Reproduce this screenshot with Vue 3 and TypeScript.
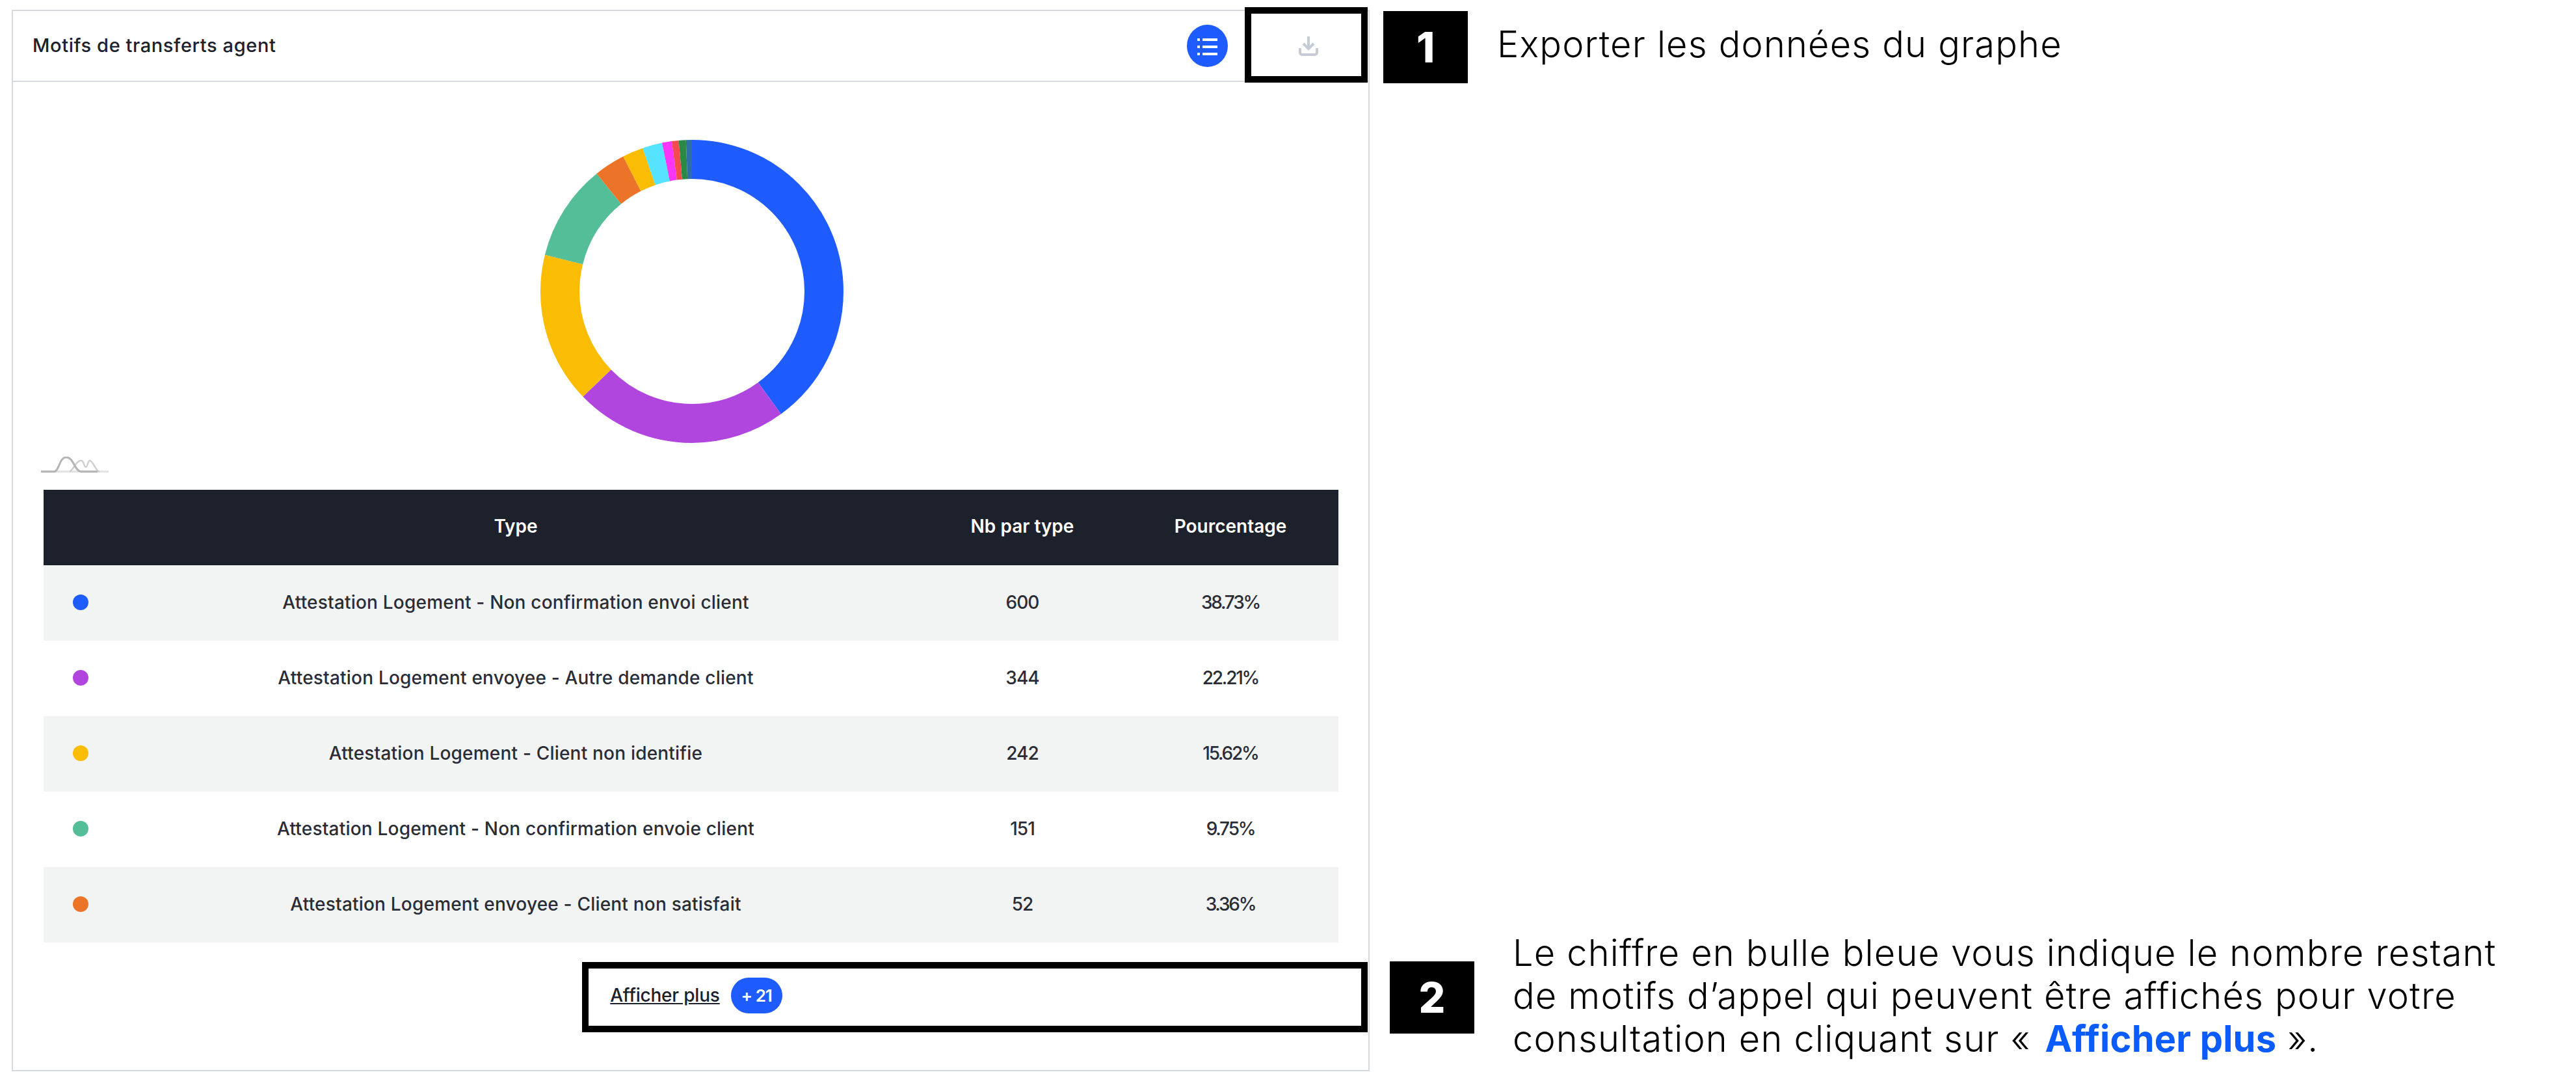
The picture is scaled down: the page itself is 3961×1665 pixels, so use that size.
<script setup lang="ts">
    interface Slice {
        color: string
        end: number
    }
    interface Row {
        color: string
        label: string
        count: number
        pct: string
    }

    // angles read clockwise from the top of the ring
    const slices: Slice[] = [
        { color: '#1f5cff', end: 144 },
        { color: '#b146df', end: 226 },
        { color: '#fbbc04', end: 284 },
        { color: '#53be98', end: 321 },
        { color: '#ec7428', end: 333 },
        { color: '#fbbc04', end: 341 },
        { color: '#55e3ff', end: 348.6 },
        { color: '#f835f8', end: 352.3 },
        { color: '#f44c4c', end: 355 },
        { color: '#2a8a44', end: 357.7 },
        { color: '#2e6fa8', end: 360 },
    ]

    const arcs = slices.map((s, i) => {
        const start = i === 0 ? 0 : slices[i - 1].end
        return { color: s.color, start, size: s.end - start }
    })

    const rows: Row[] = [
        { color: '#1f5cff', label: 'Attestation Logement - Non confirmation envoi client', count: 600, pct: '38.73%' },
        { color: '#b146df', label: 'Attestation Logement envoyee - Autre demande client', count: 344, pct: '22.21%' },
        { color: '#fbbc04', label: 'Attestation Logement - Client non identifie', count: 242, pct: '15.62%' },
        { color: '#53be98', label: 'Attestation Logement - Non confirmation envoie client', count: 151, pct: '9.75%' },
        { color: '#ec7428', label: 'Attestation Logement envoyee - Client non satisfait', count: 52, pct: '3.36%' },
    ]
</script>

<template>
    <div class="page">
        <section class="card">
            <header class="card-head">
                <h2>Motifs de transferts agent</h2>
                <span class="list-btn">
                    <svg width="31" height="26" viewBox="0 0 31 26" fill="#fff">
                        <rect x="0" y="0" width="4" height="4" />
                        <rect x="8" y="0" width="23" height="4" />
                        <rect x="0" y="11" width="4" height="4" />
                        <rect x="8" y="11" width="23" height="4" />
                        <rect x="0" y="22" width="4" height="4" />
                        <rect x="8" y="22" width="23" height="4" />
                    </svg>
                </span>
                <svg class="export" width="30" height="30" viewBox="0 0 30 30" fill="none" stroke="#c6ccd3" stroke-width="4">
                    <path d="M15 0v19" />
                    <path d="M7 11l8 8 8-8" />
                    <path d="M2 18v7a3 3 0 0 0 3 3h20a3 3 0 0 0 3-3v-7" />
                </svg>
            </header>

            <div class="chart">
                <svg class="donut" width="470" height="470" viewBox="0 0 470 470">
                    <circle
                        v-for="a in arcs"
                        :key="a.start"
                        cx="235"
                        cy="235"
                        r="203"
                        fill="none"
                        stroke-width="60"
                        pathLength="360"
                        transform="rotate(-90 235 235)"
                        :stroke="a.color"
                        :stroke-dasharray="`${a.size} 360`"
                        :stroke-dashoffset="-a.start"
                    />
                </svg>
            </div>

            <svg class="spark" width="104" height="26" viewBox="0 0 104 26" fill="none">
                <path d="M0 23H104" stroke="#e2e2e2" stroke-width="3" />
                <path d="M44 23C50 20 54 6 62 6C66 6 66 16 69 16C72 16 72 6 75 6C80 6 84 23 90 23" stroke="#cfcfcf" stroke-width="2.5" />
                <path d="M0 23H20C28 23 28 1 39 1C50 1 52 23 62 23H87" stroke="#b4b4b4" stroke-width="3" />
            </svg>

            <table class="types">
                <colgroup>
                    <col class="c-dot" />
                    <col class="c-type" />
                    <col class="c-nb" />
                    <col class="c-pct" />
                </colgroup>
                <thead>
                    <tr>
                        <th></th>
                        <th>Type</th>
                        <th>Nb par type</th>
                        <th>Pourcentage</th>
                    </tr>
                </thead>
                <tbody>
                    <tr v-for="r in rows" :key="r.label">
                        <td><span class="dot" :style="{ background: r.color }"></span></td>
                        <td>{{ r.label }}</td>
                        <td class="count">{{ r.count }}</td>
                        <td class="pct">{{ r.pct }}</td>
                    </tr>
                </tbody>
            </table>

            <div class="more">
                <a class="more-link">Afficher plus</a>
                <span class="more-badge">+ 21</span>
            </div>
        </section>

        <aside class="notes">
            <div class="note note-one">
                <span class="num">1</span>
                <p>Exporter les données du graphe</p>
            </div>
            <div class="note note-two">
                <span class="num">2</span>
                <p>
                    Le chiffre en bulle bleue vous indique le nombre restant<br />
                    de motifs d’appel qui peuvent être affichés pour votre<br />
                    consultation en cliquant sur « <b>Afficher plus</b> ».
                </p>
            </div>
        </aside>

        <div class="mark mark-export"></div>
        <div class="mark mark-more"></div>
    </div>
</template>

<style scoped>
    .page {
        position: relative;
        width: 3961px;
        height: 1665px;
        display: flex;
        box-sizing: border-box;
        padding: 15px 0 18px 18px;
        background: #fff;
        font-family: Inter, 'Noto Sans', sans-serif;
        color: #000;
        overflow: hidden;
    }
    .card {
        width: 2088px;
        box-sizing: border-box;
        border: 2px solid #d6dade;
        display: flex;
        flex-direction: column;
    }
    .card-head {
        height: 109px;
        box-sizing: border-box;
        border-bottom: 2px solid #d6dade;
        display: flex;
        align-items: center;
        padding-left: 30px;
    }
    .card-head h2 {
        flex: 1;
        margin: 0 0 2px;
        font-size: 29px;
        font-weight: 500;
        letter-spacing: 0.6px;
        color: #1d212b;
    }
    .list-btn {
        width: 63px;
        height: 65px;
        border-radius: 50%;
        background: #1f5cff;
        display: flex;
        align-items: center;
        justify-content: center;
    }
    .list-btn svg {
        margin-top: 3px;
    }
    .export {
        margin: 0 77px 0 109px;
    }
    .chart {
        display: flex;
        justify-content: center;
        padding: 87px 0 0 3px;
    }
    .donut {
        display: block;
    }
    .spark {
        display: block;
        margin: 19px 0 25px 43px;
    }
    .types {
        width: 1991px;
        margin-left: 47px;
        border-collapse: collapse;
        table-layout: fixed;
        font-size: 28px;
        color: #2a2d35;
    }
    .c-dot {
        width: 101px;
    }
    .c-type {
        width: 1250px;
    }
    .c-nb {
        width: 308px;
    }
    .c-pct {
        width: 332px;
    }
    .types th {
        height: 116px;
        box-sizing: border-box;
        padding: 0 0 4px;
        background: #1d212b;
        color: #fff;
        font-weight: 600;
    }
    .types td {
        height: 116px;
        box-sizing: border-box;
        padding: 0 0 2px;
        text-align: center;
        font-weight: 500;
        letter-spacing: 0.2px;
    }
    .types td.count {
        letter-spacing: -1px;
    }
    .types td.pct {
        letter-spacing: -2.2px;
    }
    .types tbody tr:nth-child(odd) {
        background: #f2f4f4;
    }
    .dot {
        display: block;
        width: 24px;
        height: 24px;
        margin-left: 45px;
        border-radius: 50%;
    }
    .more {
        flex: 1;
        display: flex;
        align-items: flex-start;
        justify-content: center;
        gap: 17px;
        padding: 54px 0 0 17px;
    }
    .more-link {
        margin-top: 10px;
        font-size: 28px;
        font-weight: 500;
        letter-spacing: -0.2px;
        color: #1d212b;
        text-decoration: underline;
    }
    .more-badge {
        width: 79px;
        height: 55px;
        border-radius: 28px;
        background: #1f5cff;
        color: #fff;
        font-size: 26px;
        font-weight: 600;
        letter-spacing: -1px;
        display: flex;
        align-items: center;
        justify-content: center;
    }
    .notes {
        flex: 1;
        display: flex;
        flex-direction: column;
        justify-content: space-between;
        padding: 2px 0 12px;
    }
    .note {
        display: flex;
        align-items: center;
    }
    .note p {
        margin: 0;
        font-size: 56px;
        font-weight: 300;
        line-height: 66px;
        letter-spacing: 1.15px;
    }
    .note b {
        margin-left: 5px;
        font-weight: 700;
        letter-spacing: 0.2px;
        color: #0a5cff;
    }
    .num {
        flex: none;
        background: #000;
        color: #fff;
        font-size: 64px;
        font-weight: 800;
        display: flex;
        align-items: center;
        justify-content: center;
    }
    .note-one {
        margin-left: 21px;
    }
    .note-one p {
        margin-bottom: 10px;
    }
    .note-one .num {
        width: 130px;
        height: 111px;
        margin-right: 45px;
    }
    .note-two {
        margin-left: 31px;
    }
    .note-two p {
        padding-bottom: 5px;
    }
    .note-two .num {
        width: 130px;
        height: 111px;
        margin-right: 59px;
    }
    .mark {
        position: absolute;
        box-sizing: border-box;
        border: 10px solid #000;
    }
    .mark-export {
        left: 1914px;
        top: 11px;
        width: 189px;
        height: 116px;
    }
    .mark-more {
        left: 895px;
        top: 1479px;
        width: 1208px;
        height: 108px;
    }
</style>
